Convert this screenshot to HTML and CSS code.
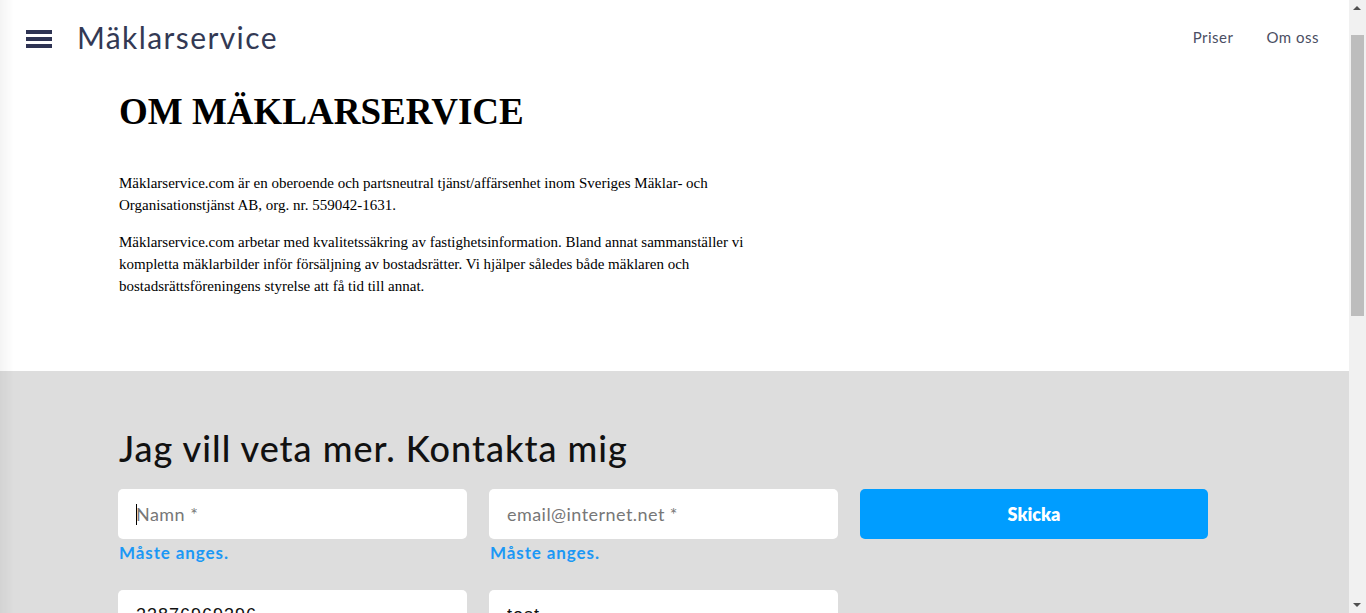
FILE: index.html
```html
<!DOCTYPE html>
<html lang="sv">
<head>
<meta charset="utf-8">
<title>Om Mäklarservice</title>
<link rel="stylesheet" href="styles.css">
</head>
<body>
<div class="edge-shadow"></div>
<div class="scrollbar" aria-hidden="true">
  <span class="arrow up"></span>
  <span class="thumb"></span>
  <span class="arrow down"></span>
</div>
<div class="page">
<header class="topbar">
  <div class="brand">
    <button class="burger" aria-label="Meny"><span></span><span></span><span></span></button>
    <a class="logo" href="#">Mäklarservice</a>
  </div>
  <nav class="nav">
    <a href="#">Priser</a>
    <a href="#">Om oss</a>
  </nav>
</header>
<main>
  <section class="about">
    <div class="container">
      <h1>OM MÄKLARSERVICE</h1>
      <div class="text">
        <p>Mäklarservice.com är en oberoende och partsneutral tjänst/affärsenhet inom Sveriges Mäklar- och Organisationstjänst AB, org. nr. 559042-1631.</p>
        <p>Mäklarservice.com arbetar med kvalitetssäkring av fastighetsinformation. Bland annat sammanställer vi kompletta mäklarbilder inför försäljning av bostadsrätter. Vi hjälper således både mäklaren och bostadsrättsföreningens styrelse att få tid till annat.</p>
      </div>
    </div>
  </section>
  <section class="contact">
    <div class="container">
      <h2>Jag vill veta mer. Kontakta mig</h2>
      <form class="form">
        <div class="field">
          <div class="input-wrap">
            <span class="caret"></span>
            <input class="input" type="text" placeholder="Namn *">
          </div>
          <div class="error">Måste anges.</div>
        </div>
        <div class="field">
          <input class="input" type="email" placeholder="email@internet.net *">
          <div class="error">Måste anges.</div>
        </div>
        <div class="field">
          <button class="submit" type="button">Skicka</button>
        </div>
        <div class="field">
          <input class="input filled" type="text" value="23876969396">
        </div>
        <div class="field">
          <input class="input filled" type="text" value="test">
        </div>
        <div class="field"></div>
      </form>
    </div>
  </section>
</main>
</div>
</body>
</html>
```

FILE: styles.css
```css
html, body {
  margin: 0;
  padding: 0;
}
body {
  font-family: "Liberation Serif", "Times New Roman", serif;
  background: #ffffff;
  color: #000;
}
.page {
  margin-right: 17px;
}
.edge-shadow {
  position: fixed;
  left: 0;
  top: 0;
  bottom: 0;
  width: 14px;
  background: linear-gradient(to right, rgba(0,0,0,0.045), rgba(0,0,0,0));
  pointer-events: none;
  z-index: 5;
}
.scrollbar {
  position: fixed;
  top: 0;
  right: 0;
  bottom: 0;
  width: 17px;
  background: #f1f1f1;
  z-index: 10;
}
.scrollbar .thumb {
  position: absolute;
  left: 2px;
  right: 2px;
  top: 35px;
  height: 281px;
  background: #bdbdbd;
}
.scrollbar .arrow {
  position: absolute;
  left: 4px;
  width: 0;
  height: 0;
  border-left: 4px solid transparent;
  border-right: 4px solid transparent;
}
.scrollbar .up {
  top: 6px;
  border-bottom: 4px solid #505050;
}
.scrollbar .down {
  bottom: 6px;
  border-top: 4px solid #505050;
}
.topbar {
  height: 76px;
  display: flex;
  align-items: center;
  justify-content: space-between;
  padding: 0 30px 0 26px;
  box-sizing: border-box;
}
.brand {
  display: flex;
  align-items: center;
  gap: 25px;
}
.burger {
  width: 26px;
  height: 18px;
  padding: 0;
  border: 0;
  background: none;
  display: flex;
  flex-direction: column;
  justify-content: space-between;
  cursor: pointer;
  margin-top: 1px;
}
.burger span {
  display: block;
  height: 4px;
  width: 26px;
  background: #2e3353;
}
.logo {
  font-family: "Lato", "Noto Sans", sans-serif;
  font-size: 30px;
  font-weight: 400;
  letter-spacing: 1.4px;
  color: #333954;
  text-decoration: none;
  margin-top: -2px;
}
.nav {
  display: flex;
  gap: 33px;
  margin-top: -3px;
}
.nav a {
  font-family: "Lato", "Noto Sans", sans-serif;
  font-size: 15px;
  color: #4a4e63;
  text-decoration: none;
  letter-spacing: 0.5px;
}
.container {
  padding-left: 118px;
  padding-right: 141px;
}
.about {
  height: 295px;
  box-sizing: border-box;
  padding-top: 15px;
}
.about h1 {
  font-size: 37px;
  font-weight: bold;
  margin: 0 0 39px 1px;
  line-height: 42px;
}
.text {
  width: 650px;
  padding-left: 1px;
}
.text p {
  font-size: 15px;
  line-height: 22px;
  margin: 0 0 15px;
}
.contact {
  background: #dddddd;
  padding-top: 55px;
  padding-bottom: 120px;
}
.contact h2 {
  font-family: "Lato", "Noto Sans", sans-serif;
  font-size: 36px;
  font-weight: 500;
  color: #111;
  margin: 0 0 19px 1px;
  line-height: 44px;
  letter-spacing: 1px;
}
.form {
  display: grid;
  grid-template-columns: 349px 349px 348px;
  column-gap: 22px;
  row-gap: 49px;
}
.input-wrap {
  position: relative;
}
.caret {
  position: absolute;
  left: 18px;
  top: 15px;
  width: 1px;
  height: 21px;
  background: #000;
}
.input {
  display: block;
  width: 100%;
  height: 50px;
  box-sizing: border-box;
  border: 0;
  border-radius: 5px;
  background: #fff;
  padding: 0 18px;
  font-family: "Lato", "Noto Sans", sans-serif;
  font-size: 18px;
  letter-spacing: 0.45px;
  color: #222;
  outline: none;
}
.input::placeholder {
  color: #777;
}
.error {
  font-family: "Lato", "Noto Sans", sans-serif;
  font-size: 17px;
  font-weight: 700;
  letter-spacing: 0.9px;
  color: #1b98f5;
  margin-top: 2px;
  padding-left: 1px;
  line-height: 24px;
  height: 0;
  overflow: visible;
}
.submit {
  display: block;
  width: 100%;
  height: 50px;
  border: 0;
  border-radius: 5px;
  background: #009dff;
  color: #fff;
  font-family: "Lato", "Noto Sans", sans-serif;
  font-size: 18px;
  font-weight: 800;
  cursor: pointer;
}
.filled {
  font-family: "Liberation Sans", Arial, sans-serif;
  font-size: 18px;
  letter-spacing: 1px;
  color: #111;
}
```
